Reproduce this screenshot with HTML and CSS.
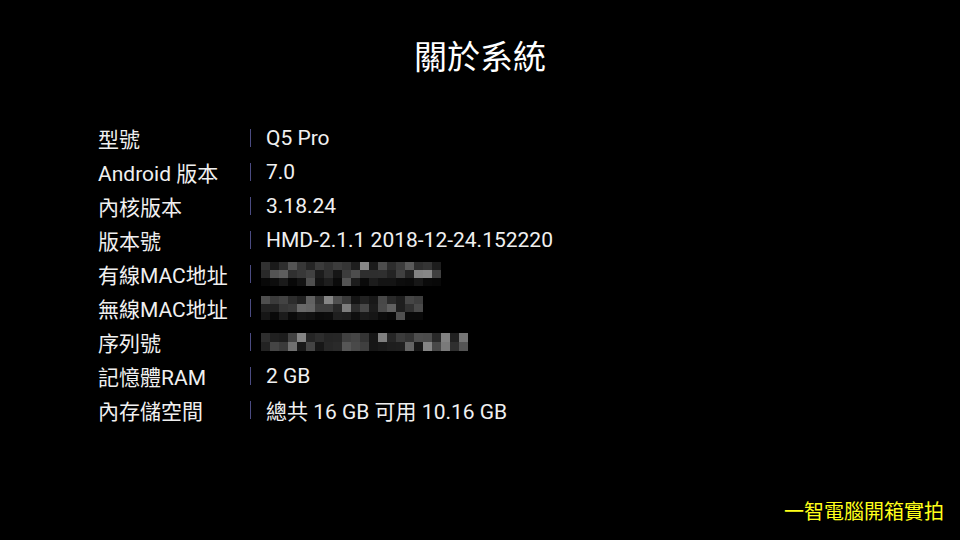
FILE: index.html
```html
<!DOCTYPE html>
<html lang="zh-Hant">

<head>
    <meta charset="UTF-8">
    <meta name="viewport" content="width=device-width, initial-scale=1.0">
    <title>關於系統</title>
    <link rel="stylesheet" href="styles.css">
</head>

<body>
    <div class="screen">
        <h1 class="title">關於系統</h1>
        <div class="info-list">
            <div class="info-row">
                <span class="label">型號</span>
                <span class="sep"></span>
                <span class="value">Q5 Pro</span>
            </div>
            <div class="info-row">
                <span class="label">Android 版本</span>
                <span class="sep"></span>
                <span class="value">7.0</span>
            </div>
            <div class="info-row">
                <span class="label">內核版本</span>
                <span class="sep"></span>
                <span class="value">3.18.24</span>
            </div>
            <div class="info-row">
                <span class="label">版本號</span>
                <span class="sep"></span>
                <span class="value">HMD-2.1.1 2018-12-24.152220</span>
            </div>
            <div class="info-row">
                <span class="label">有線MAC地址</span>
                <span class="sep"></span>
                <div class="mosaic" data-cols="20" data-rows="3" data-seed="7"></div>
            </div>
            <div class="info-row">
                <span class="label">無線MAC地址</span>
                <span class="sep"></span>
                <div class="mosaic" data-cols="18" data-rows="3" data-seed="19"></div>
            </div>
            <div class="info-row">
                <span class="label">序列號</span>
                <span class="sep"></span>
                <div class="mosaic short" data-cols="23" data-rows="2" data-seed="31"></div>
            </div>
            <div class="info-row">
                <span class="label">記憶體RAM</span>
                <span class="sep"></span>
                <span class="value">2 GB</span>
            </div>
            <div class="info-row">
                <span class="label">內存儲空間</span>
                <span class="sep"></span>
                <span class="value">總共 16 GB 可用 10.16 GB</span>
            </div>
        </div>
        <div class="footer">一智電腦開箱實拍</div>
    </div>
    <script>
        // blurred (pixelated) values, fake mosaic cells
        document.querySelectorAll(".mosaic").forEach(function (box) {
            let seed = parseInt(box.dataset.seed);
            const cols = parseInt(box.dataset.cols);
            const rows = parseInt(box.dataset.rows);
            function rnd() {
                seed = (seed * 9301 + 49297) % 233280;
                return seed / 233280;
            }
            box.style.gridTemplateColumns = "repeat(" + cols + ", 9px)";
            for (let r = 0; r < rows; r++) {
                for (let c = 0; c < cols; c++) {
                    const cell = document.createElement("span");
                    let g = 20 + Math.floor(rnd() * 60);
                    if (r == rows - 1 && rows == 3) g = 8 + Math.floor(rnd() * 25);
                    if (rnd() > 0.85) g += 60;
                    cell.style.background = "rgb(" + g + "," + g + "," + g + ")";
                    box.appendChild(cell);
                }
            }
        });
    </script>
</body>

</html>
```

FILE: styles.css
```css
html,
body {
    margin: 0;
    padding: 0;
    background-color: #000;
}

body {
    font-family: Roboto, "Noto Sans CJK TC", sans-serif;
    color: #f0f0f0;
}

.screen {
    width: 960px;
    height: 540px;
    display: flex;
    flex-direction: column;
}

.title {
    margin: 38px 0 0 0;
    font-size: 33px;
    font-weight: normal;
    line-height: 40px;
    text-align: center;
    color: #fff;
}

.info-list {
    margin-top: 43px;
    padding-left: 98px;
}

.info-row {
    display: flex;
    align-items: center;
    height: 34px;
    font-size: 21px;
}

.label {
    width: 152px;
    white-space: nowrap;
}

.sep {
    width: 1px;
    height: 18px;
    background-color: #4b4b82;
}

.value {
    margin-left: 15px;
    white-space: nowrap;
}

.mosaic {
    margin-left: 10px;
    display: grid;
    grid-auto-rows: 8px;
}

.mosaic.short {
    grid-auto-rows: 9px;
}

.footer {
    margin-top: auto;
    padding: 0 16px 16px 0;
    text-align: right;
    font-size: 20px;
    line-height: 24px;
    color: #ffff1a;
}
```
